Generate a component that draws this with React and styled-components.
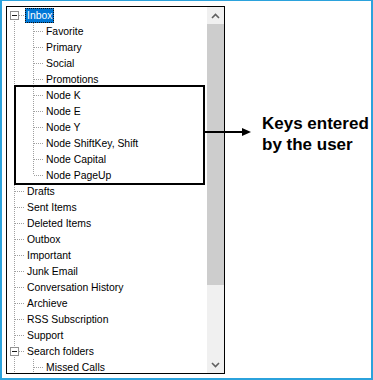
import React from "react";
import styled, { createGlobalStyle } from "styled-components";

const GlobalStyle = createGlobalStyle`
  html, body {
    margin: 0;
    padding: 0;
    background: #fff;
  }
`;

const nodes = [
  { label: "Inbox", level: 0, expander: true, selected: true, first: true },
  { label: "Favorite", level: 1 },
  { label: "Primary", level: 1 },
  { label: "Social", level: 1 },
  { label: "Promotions", level: 1 },
  { label: "Node K", level: 1 },
  { label: "Node E", level: 1 },
  { label: "Node Y", level: 1 },
  { label: "Node ShiftKey, Shift", level: 1 },
  { label: "Node Capital", level: 1 },
  { label: "Node PageUp", level: 1, last: true },
  { label: "Drafts", level: 0 },
  { label: "Sent Items", level: 0 },
  { label: "Deleted Items", level: 0 },
  { label: "Outbox", level: 0 },
  { label: "Important", level: 0 },
  { label: "Junk Email", level: 0 },
  { label: "Conversation History", level: 0 },
  { label: "Archieve", level: 0 },
  { label: "RSS Subscription", level: 0 },
  { label: "Support", level: 0 },
  { label: "Search folders", level: 0, expander: true },
  { label: "Missed Calls", level: 1 },
];

function App() {
  return (
    <>
      <GlobalStyle />
      <Frame>
        <TreeBox>
          <TreeList>
            {nodes.map((n, i) => (
              <Row key={i}>
                {n.level === 0 ? (
                  <Cell $v={n.first ? "bottom" : "full"} $h>
                    {n.expander && <Expander />}
                  </Cell>
                ) : (
                  <>
                    <Cell $v="full" />
                    <Cell $v={n.last ? "top" : "full"} $h />
                  </>
                )}
                <Label $selected={n.selected}>{n.label}</Label>
              </Row>
            ))}
          </TreeList>
          <ScrollBar>
            <ScrollButton>
              <svg width="9" height="6" viewBox="0 0 9 6">
                <path d="M1 5 L4.5 1.5 L8 5" fill="none" stroke="#606060" strokeWidth="1.6" />
              </svg>
            </ScrollButton>
            <Track>
              <Thumb />
            </Track>
            <ScrollButton>
              <svg width="9" height="6" viewBox="0 0 9 6">
                <path d="M1 1 L4.5 4.5 L8 1" fill="none" stroke="#606060" strokeWidth="1.6" />
              </svg>
            </ScrollButton>
          </ScrollBar>
        </TreeBox>
        <Caption>
          Keys entered
          <br />
          by the user
        </Caption>
        <Highlight />
        <Arrow width="47" height="10" viewBox="0 0 47 10">
          <line x1="0" y1="5" x2="39" y2="5" stroke="#000" strokeWidth="2" />
          <polygon points="37,1 46,5 37,9" fill="#000" />
        </Arrow>
      </Frame>
    </>
  );
}

export default App;

const Frame = styled.div`
  position: relative;
  box-sizing: border-box;
  width: 373px;
  height: 380px;
  border: 2px solid #2ba2dc;
  border-top-width: 1px;
  padding: 5px 4px 4px 4px;
  display: flex;
  align-items: flex-start;
  background: #fff;
`;

const TreeBox = styled.div`
  box-sizing: border-box;
  width: 219px;
  height: 368px;
  border: 1px solid #000;
  display: flex;
  background: #fff;
  flex-shrink: 0;
`;

const TreeList = styled.div`
  width: 200px;
  height: 100%;
  overflow: hidden;
  font-family: "Liberation Sans", Arial, sans-serif;
  font-size: 10.4px;
  color: #000;
`;

const Row = styled.div`
  display: flex;
  align-items: center;
  height: 16px;
  white-space: nowrap;
`;

const dotsV = "repeating-linear-gradient(to bottom, #a0a0a0 0 1px, transparent 1px 2px)";
const dotsH = "repeating-linear-gradient(to right, #a0a0a0 0 1px, transparent 1px 2px)";

const Cell = styled.div`
  position: relative;
  width: 19px;
  height: 16px;
  flex-shrink: 0;

  &::before {
    content: "";
    position: absolute;
    left: 7px;
    width: 1px;
    background: ${dotsV};
    top: ${(p) => (p.$v === "bottom" ? "8px" : "0")};
    height: ${(p) => (p.$v === "full" ? "16px" : "8px")};
  }

  &::after {
    content: "";
    display: ${(p) => (p.$h ? "block" : "none")};
    position: absolute;
    left: 8px;
    top: 8px;
    width: 10px;
    height: 1px;
    background: ${dotsH};
  }
`;

const Expander = styled.span`
  position: absolute;
  z-index: 1;
  left: 3px;
  top: 4px;
  box-sizing: border-box;
  width: 9px;
  height: 9px;
  border: 1px solid #919191;
  background: #fff;

  &::after {
    content: "";
    position: absolute;
    left: 1px;
    top: 3px;
    width: 5px;
    height: 1px;
    background: #1a1a1a;
  }
`;

const Label = styled.span`
  margin-left: -1px;
  padding: 0 1px;
  height: 13px;
  line-height: 13px;
  border: 1px dotted ${(p) => (p.$selected ? "#111" : "transparent")};
  background: ${(p) => (p.$selected ? "#0078d7" : "transparent")};
  color: ${(p) => (p.$selected ? "#fff" : "#000")};
`;

const ScrollBar = styled.div`
  width: 17px;
  height: 100%;
  display: flex;
  flex-direction: column;
  background: #f0f0f0;
`;

const ScrollButton = styled.div`
  height: 17px;
  flex-shrink: 0;
  display: flex;
  align-items: center;
  justify-content: center;
`;

const Track = styled.div`
  flex: 1;
`;

const Thumb = styled.div`
  height: 261px;
  background: #cdcdcd;
`;

const Caption = styled.div`
  margin-left: 37px;
  margin-top: 107px;
  white-space: nowrap;
  font-family: "Liberation Sans", Arial, sans-serif;
  font-weight: bold;
  font-size: 17px;
  line-height: 21px;
  color: #000;
`;

const Highlight = styled.div`
  position: absolute;
  left: 12px;
  top: 84px;
  width: 191px;
  height: 100px;
  box-sizing: border-box;
  border: 2px solid #000;
  pointer-events: none;
`;

const Arrow = styled.svg`
  position: absolute;
  left: 203px;
  top: 126px;
`;
